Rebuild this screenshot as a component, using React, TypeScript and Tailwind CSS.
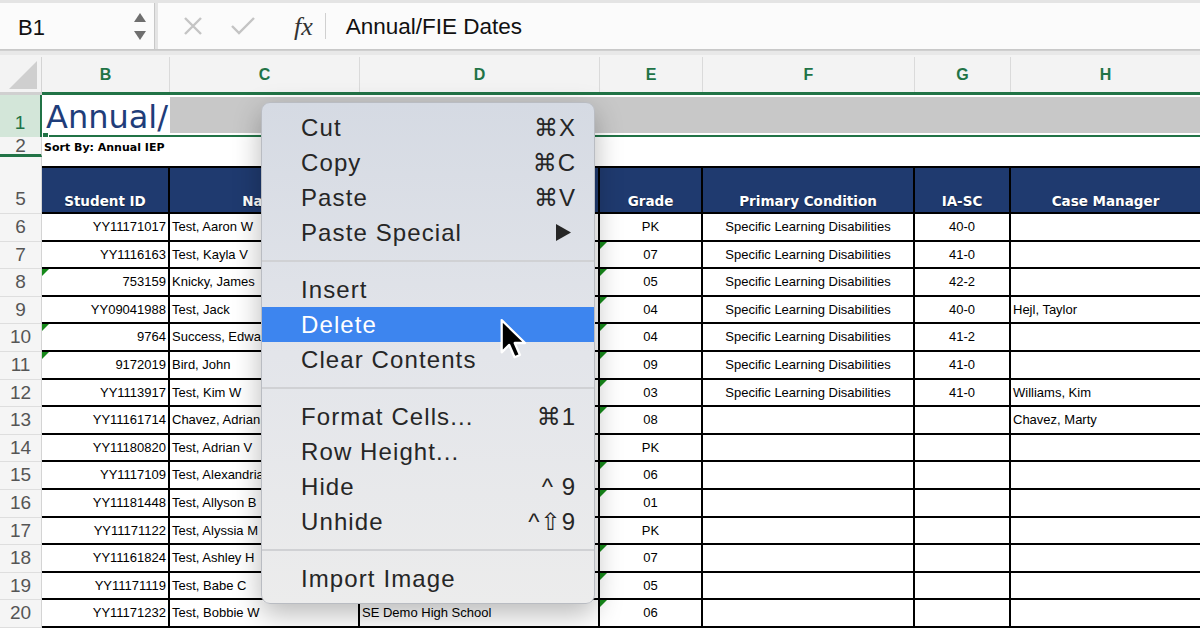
import React from 'react';

const rows = [
  { n: 6, id: 'YY11171017', name: 'Test, Aaron W', school: '', grade: 'PK', cond: 'Specific Learning Disabilities', ia: '40-0', cm: '', bTri: false, eTri: false },
  { n: 7, id: 'YY1116163', name: 'Test, Kayla V', school: '', grade: '07', cond: 'Specific Learning Disabilities', ia: '41-0', cm: '', bTri: false, eTri: true },
  { n: 8, id: '753159', name: 'Knicky, James', school: '', grade: '05', cond: 'Specific Learning Disabilities', ia: '42-2', cm: '', bTri: true, eTri: true },
  { n: 9, id: 'YY09041988', name: 'Test, Jack', school: '', grade: '04', cond: 'Specific Learning Disabilities', ia: '40-0', cm: 'Hejl, Taylor', bTri: false, eTri: true },
  { n: 10, id: '9764', name: 'Success, Edward', school: '', grade: '04', cond: 'Specific Learning Disabilities', ia: '41-2', cm: '', bTri: true, eTri: true },
  { n: 11, id: '9172019', name: 'Bird, John', school: '', grade: '09', cond: 'Specific Learning Disabilities', ia: '41-0', cm: '', bTri: true, eTri: true },
  { n: 12, id: 'YY1113917', name: 'Test, Kim W', school: '', grade: '03', cond: 'Specific Learning Disabilities', ia: '41-0', cm: 'Williams, Kim', bTri: false, eTri: true },
  { n: 13, id: 'YY11161714', name: 'Chavez, Adrian', school: '', grade: '08', cond: '', ia: '', cm: 'Chavez, Marty', bTri: false, eTri: true },
  { n: 14, id: 'YY11180820', name: 'Test, Adrian V', school: '', grade: 'PK', cond: '', ia: '', cm: '', bTri: false, eTri: false },
  { n: 15, id: 'YY1117109', name: 'Test, Alexandria', school: '', grade: '06', cond: '', ia: '', cm: '', bTri: false, eTri: true },
  { n: 16, id: 'YY11181448', name: 'Test, Allyson B', school: '', grade: '01', cond: '', ia: '', cm: '', bTri: false, eTri: true },
  { n: 17, id: 'YY11171122', name: 'Test, Alyssia M', school: '', grade: 'PK', cond: '', ia: '', cm: '', bTri: false, eTri: false },
  { n: 18, id: 'YY11161824', name: 'Test, Ashley H', school: '', grade: '07', cond: '', ia: '', cm: '', bTri: false, eTri: true },
  { n: 19, id: 'YY11171119', name: 'Test, Babe C', school: '', grade: '05', cond: '', ia: '', cm: '', bTri: false, eTri: true },
  { n: 20, id: 'YY11171232', name: 'Test, Bobbie W', school: 'SE Demo High School', grade: '06', cond: '', ia: '', cm: '', bTri: false, eTri: true },
];

const menu = [
  { t: 'Cut', k: '⌘X' },
  { t: 'Copy', k: '⌘C' },
  { t: 'Paste', k: '⌘V' },
  { t: 'Paste Special', arrow: true },
  'sep',
  { t: 'Insert' },
  { t: 'Delete', active: true },
  { t: 'Clear Contents' },
  'sep',
  { t: 'Format Cells...', k: '⌘1' },
  { t: 'Row Height...' },
  { t: 'Hide', k: '^ 9' },
  { t: 'Unhide', k: '^⇧9' },
  'sep',
  { t: 'Import Image' },
] as const;

const Tri = () => (
  <span className="absolute left-0 top-0 h-0 w-0 border-t-[7px] border-r-[7px] border-t-[#16891a] border-r-transparent" />
);

const RowHead = ({ n, className = '' }: { n: number; className?: string }) => (
  <div className={`w-[42px] shrink-0 flex justify-center bg-[#f5f5f5] border-r border-[#d4d4d4] text-[19px] text-[#555] font-['Liberation_Sans',Arial,sans-serif] ${className}`}>
    {n}
  </div>
);

const DataRow = ({ r }: { r: typeof rows[0] }) => (
  <div className="flex h-[27.6px] text-[13px] text-black font-['Liberation_Sans',Arial,sans-serif]">
    <RowHead n={r.n} className="items-center border-b border-b-[#dedede]" />
    <div className="relative w-[128px] shrink-0 flex items-center justify-end pr-[2px] border-r-2 border-b-2 border-black">
      {r.bTri && <Tri />}
      {r.id}
    </div>
    <div className="w-[190px] shrink-0 flex items-center pl-[2px] overflow-hidden whitespace-nowrap border-r-2 border-b-2 border-black">
      {r.name}
    </div>
    <div className="w-[240px] shrink-0 flex items-center pl-[2px] overflow-hidden whitespace-nowrap border-r-2 border-b-2 border-black">
      {r.school}
    </div>
    <div className="relative w-[103px] shrink-0 flex items-center justify-center border-r-2 border-b-2 border-black">
      {r.eTri && <Tri />}
      {r.grade}
    </div>
    <div className="w-[212px] shrink-0 flex items-center justify-center border-r-2 border-b-2 border-black">
      {r.cond}
    </div>
    <div className="w-[96px] shrink-0 flex items-center justify-center border-r-2 border-b-2 border-black">
      {r.ia}
    </div>
    <div className="flex-1 flex items-center pl-[2px] border-b-2 border-black">{r.cm}</div>
  </div>
);

const ContextMenu = () => (
  <div className="absolute left-[261px] top-[102px] w-[334px] h-[502px] rounded-[9px] border border-[#b9bcc2] bg-linear-to-b from-[#d5dae3] via-[#e3e5ea] to-[#ececec] shadow-[0_10px_28px_rgba(0,0,0,0.28)] py-[7px] font-['Liberation_Sans',Arial,sans-serif] text-[24px] text-[#262626]">
    {menu.map((m, i) =>
      m === 'sep' ? (
        <div key={i} className="h-[22px] flex items-center">
          <div className="h-[2px] w-full bg-[#d0d1d4]" />
        </div>
      ) : (
        <div
          key={i}
          className={`h-[35px] flex items-center justify-between pl-[39px] pr-[18px] ${'active' in m && m.active ? 'bg-[#3d85ef] text-white' : ''}`}
        >
          <span className="tracking-[1.1px]">{m.t}</span>
          {'k' in m && m.k && <span className="tracking-[1px] font-['Liberation_Sans','DejaVu_Sans',sans-serif]">{m.k}</span>}
          {'arrow' in m && m.arrow && (
            <svg width="15" height="17" viewBox="0 0 15 17" className="mr-[5px]">
              <polygon points="0,0 15,8.5 0,17" fill="#262626" />
            </svg>
          )}
        </div>
      )
    )}
  </div>
);

const Cursor = () => (
  <svg className="absolute left-[499px] top-[318px]" width="30" height="44" viewBox="0 0 17 25">
    <path
      d="M1.5 1.2 L1.5 19.5 L5.8 15.3 L8.8 22.3 L11.9 21 L8.9 14.2 L14.8 14.2 Z"
      fill="#000"
      stroke="#fff"
      strokeWidth="1.3"
      strokeLinejoin="round"
    />
  </svg>
);

export default function App() {
  return (
    <div className="relative w-[1200px] h-[628px] overflow-hidden bg-white">
      {/* formula bar */}
      <div className="h-[50px] flex bg-[#e4e4e4] pt-[3px] border-b border-[#c9c9c9]">
        <div className="w-[155px] h-full flex items-center justify-between pl-[18px] pr-[8px] bg-[#fbfbfb] border-r border-[#c8c8c8] font-['Liberation_Sans',Arial,sans-serif] text-[22px] text-[#111]">
          <span className="pt-[2px]">B1</span>
          <div className="flex flex-col gap-[9px]">
            <svg width="12" height="9" viewBox="0 0 12 9"><polygon points="6,0 12,9 0,9" fill="#6f6f6f" /></svg>
            <svg width="12" height="9" viewBox="0 0 12 9"><polygon points="0,0 12,0 6,9" fill="#6f6f6f" /></svg>
          </div>
        </div>
        <div className="ml-[3px] flex-1 h-full flex items-center bg-[#fbfbfb]">
          <svg className="ml-[24px]" width="22" height="22" viewBox="0 0 22 22">
            <path d="M3 3 L19 19 M19 3 L3 19" stroke="#c4c4c4" strokeWidth="2.4" />
          </svg>
          <svg className="ml-[26px]" width="26" height="22" viewBox="0 0 26 22">
            <path d="M2 11 L9 18 L24 3" stroke="#c4c4c4" strokeWidth="2.4" fill="none" />
          </svg>
          <span className="ml-[38px] font-['Liberation_Serif',serif] italic text-[26px] text-[#333]">fx</span>
          <div className="ml-[12px] w-px h-[26px] bg-[#d0d0d0]" />
          <span className="ml-[20px] pt-[2px] font-['Liberation_Sans',Arial,sans-serif] text-[22.5px] text-[#111]">Annual/FIE Dates</span>
        </div>
      </div>
      <div className="h-[5px] bg-[#e8e8e8] border-t border-[#cfcfcf]" />

      {/* column headers */}
      <div className="flex h-[37px] pt-[2px] bg-[#f3f3f3] font-['Liberation_Sans',Arial,sans-serif] text-[16px] font-bold text-[#217346]">
        <div className="w-[42px] shrink-0 relative border-r border-[#d4d4d4]">
          <svg className="absolute right-[4px] bottom-[3px]" width="28" height="28" viewBox="0 0 28 28">
            <polygon points="28,0 28,28 0,28" fill="#cfcfcf" />
          </svg>
        </div>
        <div className="w-[128px] shrink-0 flex items-center justify-center border-r border-[#dadada]">B</div>
        <div className="w-[190px] shrink-0 flex items-center justify-center border-r border-[#dadada]">C</div>
        <div className="w-[240px] shrink-0 flex items-center justify-center border-r border-[#dadada]">D</div>
        <div className="w-[103px] shrink-0 flex items-center justify-center border-r border-[#dadada]">E</div>
        <div className="w-[212px] shrink-0 flex items-center justify-center border-r border-[#dadada]">F</div>
        <div className="w-[96px] shrink-0 flex items-center justify-center border-r border-[#dadada]">G</div>
        <div className="flex-1 flex items-center justify-center">H</div>
      </div>
      <div className="flex h-[3px]">
        <div className="w-[42px] bg-[#d0d0d0]" />
        <div className="flex-1 bg-[#217346]" />
      </div>

      {/* row 1 */}
      <div className="relative flex h-[42px]">
        <div className="w-[42px] shrink-0 flex items-end justify-center bg-[#d3e6d9] border-r-2 border-[#217346] font-['Liberation_Sans',Arial,sans-serif] text-[19px] text-[#217346]">
          1
        </div>
        <div className="flex-1 flex flex-col">
          <div className="flex-1 flex">
            <div className="w-[128px] shrink-0 flex items-center pl-[4px] pt-[3px] font-['DejaVu_Sans',sans-serif] text-[32px] leading-none text-[#1f3d7a]">
              Annual/
            </div>
            <div className="flex-1 my-[2px] bg-[#c8c8c8]" />
          </div>
          <div className="h-[2px] bg-[#217346]" />
        </div>
        <div className="absolute left-[42px] top-[37px] w-[7px] h-[6px] bg-[#217346] border border-white" />
      </div>

      {/* row 2 */}
      <div className="flex h-[20px]">
        <div className="w-[42px] shrink-0 flex items-center justify-center bg-[#f5f5f5] border-r border-[#d4d4d4] border-b-[3px] border-b-[#217346] font-['Liberation_Sans',Arial,sans-serif] text-[19px] leading-none text-[#555]">
          2
        </div>
        <div className="flex-1 flex items-center pl-[2px] pt-[3px] font-['DejaVu_Sans',sans-serif] font-bold text-[11px] text-black">
          Sort By: Annual IEP
        </div>
      </div>

      {/* row 5 header */}
      <div className="flex h-[57px]">
        <RowHead n={5} className="items-end border-b border-b-[#dedede]" />
        <div className="flex-1 flex flex-col">
          <div className="h-[9px]" />
          <div className="flex-1 flex bg-[#1f3a6f] border-t-2 border-b-2 border-black font-['DejaVu_Sans',sans-serif] font-bold text-[13.5px] text-white [text-shadow:0_1px_1px_rgba(0,0,0,0.5)]">
            <div className="w-[128px] shrink-0 flex items-end justify-center pb-[1px] border-r-2 border-black">Student ID</div>
            <div className="w-[190px] shrink-0 flex items-end justify-center pb-[1px] border-r-2 border-black">Name</div>
            <div className="w-[240px] shrink-0 flex items-end justify-center pb-[1px] border-r-2 border-black">Campus</div>
            <div className="w-[103px] shrink-0 flex items-end justify-center pb-[1px] border-r-2 border-black">Grade</div>
            <div className="w-[212px] shrink-0 flex items-end justify-center pb-[1px] border-r-2 border-black">Primary Condition</div>
            <div className="w-[96px] shrink-0 flex items-end justify-center pb-[1px] border-r-2 border-black">IA-SC</div>
            <div className="flex-1 flex items-end justify-center pb-[1px]">Case Manager</div>
          </div>
        </div>
      </div>

      {rows.map((r) => (
        <DataRow key={r.n} r={r} />
      ))}

      <ContextMenu />
      <Cursor />
    </div>
  );
}
